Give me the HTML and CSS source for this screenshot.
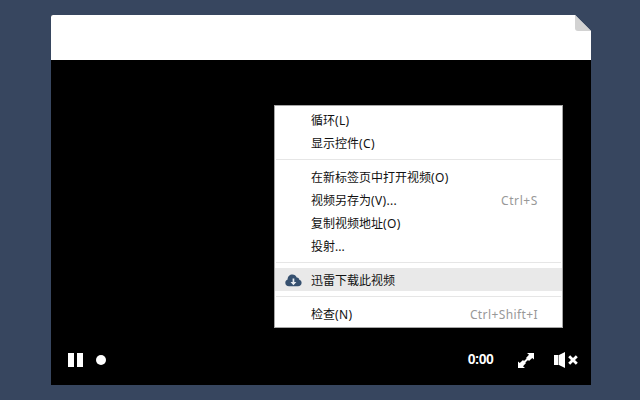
FILE: index.html
```html
<!DOCTYPE html>
<html lang="zh-CN">
<head>
<meta charset="utf-8">
<title>视频</title>
<link rel="stylesheet" href="styles.css">
</head>
<body>
<main class="player">
  <header class="player-head">
    <svg class="fold" width="16" height="16" viewBox="0 0 16 16"><path fill="#37465f" d="M0 0h16v16z"/><path fill="#d2d2d2" d="M0 0l16 16H3q-3 0-3-3z"/></svg>
  </header>
  <section class="stage">
    <div class="menu">
      <div class="item"><span class="label">循环<span class="access">(L)</span></span></div>
      <div class="item"><span class="label">显示控件<span class="access">(C)</span></span></div>
      <hr class="sep">
      <div class="item"><span class="label">在新标签页中打开视频<span class="access">(O)</span></span></div>
      <div class="item"><span class="label">视频另存为<span class="access">(V)...</span></span><span class="key key-s">Ctrl+S</span></div>
      <div class="item"><span class="label">复制视频地址<span class="access">(O)</span></span></div>
      <div class="item"><span class="label">投射...</span></div>
      <hr class="sep">
      <div class="item active">
        <svg class="cloud" width="17" height="13" viewBox="0 0 17 13"><path fill="#36506f" d="M4 12.2C1.700 12.200.3 10.800.3 8.800c0-1.600 1-2.800 2.300-3.200C2.600 2.600 4.700.6 7.400.6c2 0 3.600 1.100 4.300 2.800 1.500-.1 2.600.9 2.600 2.300 1.400.4 2.300 1.500 2.300 3 0 2.100-1.500 3.500-3.600 3.500z"/><path fill="#e9edf2" d="M7.600 4.600h1.700v3.500h2.100l-2.950 3.100L5.500 8.100h2.100z"/></svg>
        <span class="label">迅雷下载此视频</span>
      </div>
      <hr class="sep">
      <div class="item"><span class="label">检查<span class="access">(N)</span></span><span class="key key-i">Ctrl+Shift+I</span></div>
    </div>
  </section>
  <footer class="controls">
    <svg class="pause" width="15" height="14" viewBox="0 0 15 14"><path fill="#fff" d="M0 0h6v14H0zM9 0h6v14H9z"/></svg>
    <span class="knob"></span>
    <span class="time">0:00</span>
    <svg class="expand" width="16" height="15" viewBox="0 0 16 15"><path fill="#fff" d="M9 0h7v6.500L14.200 4.900 11 7.900 8 5l3-3.200zM0 15V8.500l1.800 1.600L5 7.100 8 10l-3 3.200L7 15z"/><path stroke="#fff" stroke-width="2" d="M5 10.300l6-5.600"/></svg>
    <svg class="mute" width="24" height="16" viewBox="0 0 24 16"><path fill="#fff" d="M0 3h4.500v10H0zM5 3l6-3v16l-6-3z"/><path stroke="#fff" stroke-width="2.800" d="M15.200 4.200l7.600 7.600M22.800 4.200l-7.600 7.600"/></svg>
  </footer>
</main>
</body>
</html>
```
FILE: styles.css
```css
* { box-sizing: border-box; }

body {
  margin: 0;
  height: 400px;
  padding: 15px 49px 15px 51px;
  overflow: hidden;
  background: #37465f;
  font: 12px/22px "Noto Sans", "Noto Sans CJK SC", sans-serif;
}

.player {
  display: flex;
  flex-direction: column;
  height: 370px;
  background: #000;
  border-radius: 2px 0 0 0;
  overflow: hidden;
}

.player-head {
  display: flex;
  justify-content: flex-end;
  height: 45px;
  background: #fff;
}

.stage {
  flex: 1;
  padding: 45px 28px 0 223px;
}

.menu {
  height: 223px;
  padding: 2px 0;
  border: 1px solid #a6a6a6;
  background: #fff;
  color: #111;
}

.item {
  display: flex;
  position: relative;
  height: 23px;
  padding: 2px 24px 0 36px;
  white-space: nowrap;
}

.active { background: #e9e9e9; }

.access { letter-spacing: 0.35px; }

.key {
  margin-left: auto;
  color: #989898;
}

.key-s { letter-spacing: 0.6px; }
.key-i { letter-spacing: 0.4px; }

.cloud {
  position: absolute;
  left: 10px;
  top: 6px;
}

.sep {
  height: 1px;
  margin: 5px 1px;
  border: 0;
  background: #e6e6e6;
}

.controls {
  display: flex;
  align-items: center;
  height: 50px;
  padding: 0 13px 0 17px;
  color: #fff;
}

.knob {
  width: 10px;
  height: 10px;
  margin-left: 13px;
  border-radius: 50%;
  background: #fff;
}

.time {
  margin-left: auto;
  font: bold 14px/16px "Liberation Sans", sans-serif;
  letter-spacing: -0.7px;
  transform: translateY(-1px);
}

.expand { margin-left: 25px; }
.mute { margin-left: 20px; }
```
